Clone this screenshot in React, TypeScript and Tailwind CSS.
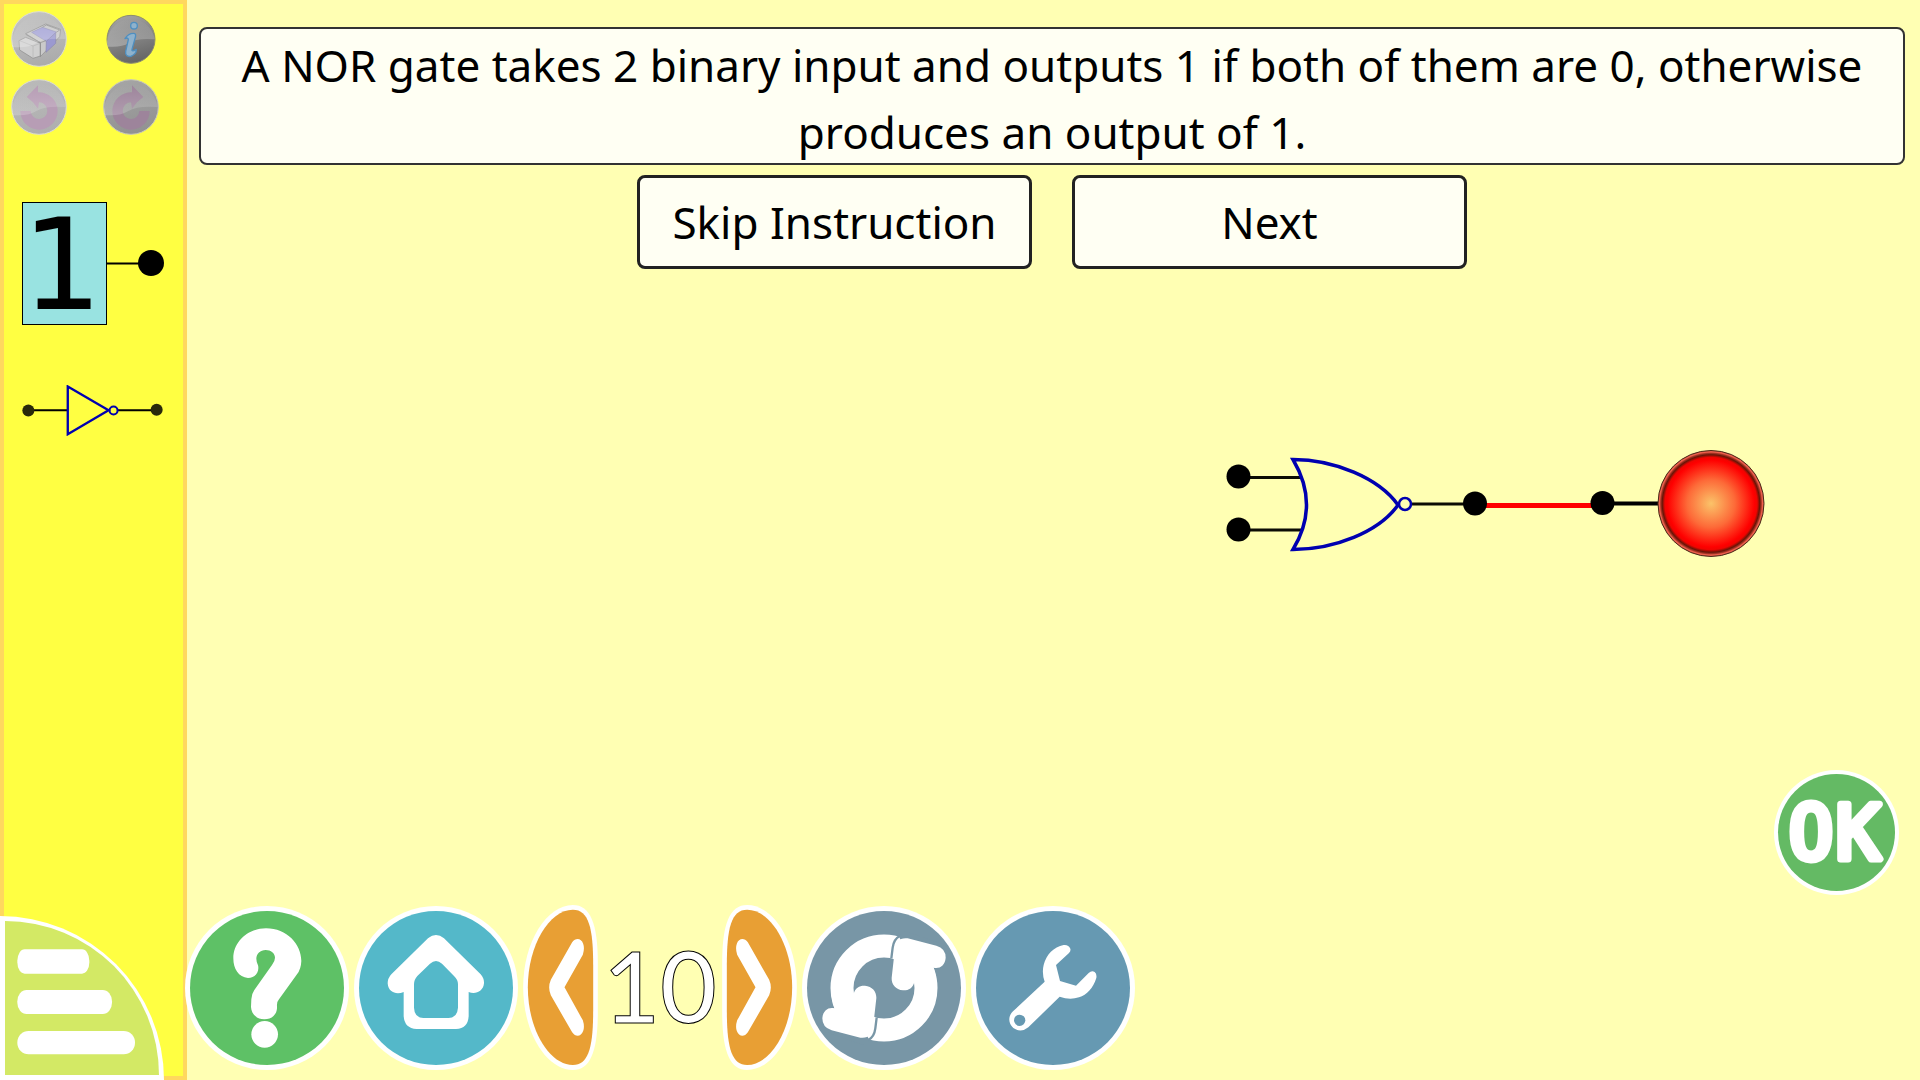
import React from "react";

const roundButton = "block size-[164px] shrink-0 rounded-full";

function GlossDisc({ id, cx, cy, r, light, dark, rim, opacity }: {
  id: string; cx: number; cy: number; r: number; light: string; dark: string; rim: string; opacity: number;
}) {
  return (
    <>
      <defs>
        <linearGradient id={id} x1="0.2" y1="0" x2="0.5" y2="1">
          <stop offset="0" stopColor={light} />
          <stop offset="1" stopColor={dark} />
        </linearGradient>
        <linearGradient id={id + "g"} x1="0" y1="0" x2="0" y2="1">
          <stop offset="0" stopColor="#fff" stopOpacity="0" />
          <stop offset="1" stopColor="#fff" stopOpacity={opacity} />
        </linearGradient>
      </defs>
      <circle cx={cx} cy={cy} r={r} fill={`url(#${id})`} stroke={rim} strokeWidth="3" />
    </>
  );
}

function Gloss({ id, cx, cy, r }: { id: string; cx: number; cy: number; r: number }) {
  return (
    <path
      d={`M${cx - r} ${cy + r * 0.3} A${r} ${r} 0 0 1 ${cx + r} ${cy} Q${cx + r * 0.2} ${cy - r * 0.05} ${cx - r * 0.1} ${cy + r * 0.15} T${cx - r} ${cy + r * 0.3}Z`}
      fill={`url(#${id}g)`}
    />
  );
}

function EraserIcon() {
  return (
    <svg viewBox="34 33 168 168" className="size-14">
      <GlossDisc id="er" cx={118} cy={117} r={82} light="#c4c4c4" dark="#ababab" rim="#dcdcd4" opacity={0.25} />
      <g stroke="#8c8c8c" strokeWidth="2" strokeLinejoin="round">
        <path d="M78 101 L138 72 L183 88 L180 110 L122 170 L122 128Z" fill="#cacaca" />
        <path d="M58 122 L78 112 L122 130 L122 168 L100 175 L60 150Z" fill="#d0d0d0" />
        <path d="M60 122 L100 138 L100 174 M100 138 L122 130" fill="none" stroke="#b5b5b5" />
        <path d="M96 97 L128 82 L170 96 L140 124Z" fill="#a9a8d8" stroke="#9897bd" />
        <path d="M140 124 L168 98 L168 130 L139 157Z" fill="#9b99d0" stroke="#8b89b0" />
        <path d="M78 103 L122 128 L122 170 M122 128 L139 122 M128 82 L140 75 L180 90 L170 97" fill="none" />
      </g>
      <Gloss id="er" cx={118} cy={117} r={80} />
    </svg>
  );
}

function InfoIcon() {
  return (
    <svg viewBox="308 33 168 168" className="size-14">
      <GlossDisc id="in" cx={392} cy={118} r={72} light="#a5a5a5" dark="#666" rim="#8c8c70" opacity={0.28} />
      <Gloss id="in" cx={392} cy={118} r={71} />
      <g fill="#8fb2cc" stroke="#4f8fc0" strokeWidth="4" strokeLinejoin="round">
        <circle cx="401" cy="77" r="10" />
        <path d="M374 116 Q384 99 401 100 Q408 101 405 112 L395 148 Q393 157 408 148 Q409 161 392 169 Q374 172 376 154 L384 119 Q384 112 374 116Z" />
      </g>
    </svg>
  );
}

function TurnIcon({ redo = false }: { redo?: boolean }) {
  const id = redo ? "re" : "un";
  return (
    <svg viewBox="31 239 168 168" className="size-14">
      <GlossDisc id={id} cx={115} cy={323} r={82} light={redo ? "#a6a6a6" : "#bababa"} dark={redo ? "#929292" : "#afafaf"} rim={redo ? "#c6c6bd" : "#dbdbd3"} opacity={0.2} />
      <g transform={redo ? "translate(230 0) scale(-1 1)" : undefined}>
        <path
          d="M59 335 L90 335 A25 25 0 1 0 115 309 L112 328 L112 258 L78 293 L97 309 L112 328 L112 279 A56 56 0 1 1 59 335Z"
          fill={redo ? "#9d849b" : "#b79db5"}
        />
      </g>
      <Gloss id={id} cx={115} cy={323} r={80} />
    </svg>
  );
}

function ConstantOne() {
  return (
    <svg viewBox="22 202 142 123" className="h-[123px] w-[142px] overflow-visible">
      <rect x="22.5" y="202.5" width="84" height="122" fill="#99e3e1" stroke="#000" />
      <path d="M107 263.500H140" stroke="#000" strokeWidth="2" />
      <circle cx="151" cy="263" r="13" />
      <text x="62" y="309" fontSize="126" textAnchor="middle" fontFamily="DejaVu Sans, sans-serif">1</text>
    </svg>
  );
}

function NotGate() {
  return (
    <svg viewBox="67 614 425 152" className="h-[51px] w-[142px]" fill="none">
      <path d="M86 689H204M354 689H470" stroke="#000" strokeWidth="6" />
      <path d="M204 618 L326 689 L204 761Z" stroke="#0000b0" strokeWidth="7" />
      <circle cx="341" cy="690" r="12" stroke="#0000b0" strokeWidth="6" />
      <circle cx="86" cy="690" r="18" fill="#29290b" />
      <circle cx="470" cy="688" r="18" fill="#29290b" />
    </svg>
  );
}

function Circuit() {
  return (
    <svg viewBox="1226 448 540 112" className="h-28 w-[540px]" fill="none" role="img" aria-label="NOR gate wired to a lit bulb">
      <defs>
        <radialGradient id="bulb">
          <stop offset="0" stopColor="#fbc369" />
          <stop offset="0.45" stopColor="#fd6a38" />
          <stop offset="0.82" stopColor="#ff0000" />
          <stop offset="0.87" stopColor="#f00400" />
          <stop offset="0.92" stopColor="#661607" />
          <stop offset="0.95" stopColor="#a83526" />
          <stop offset="0.97" stopColor="#f0604c" />
          <stop offset="1" stopColor="#d85848" />
        </radialGradient>
      </defs>
      <path d="M1486 505.500H1612" stroke="#f00" strokeWidth="5" />
      <path d="M1248 477.500H1301M1248 530H1301M1412 504H1466" stroke="#0c0c04" strokeWidth="3" />
      <path d="M1610 503.500H1659" stroke="#000" strokeWidth="4" />
      <path d="M1293 459.500C1334 459.500 1379 478 1398 505C1379 532 1334 549.500 1293 549.500Q1320 505 1293 459.500Z" stroke="#0000b0" strokeWidth="3.500" />
      <circle cx="1405" cy="504" r="6" stroke="#0000b0" strokeWidth="2.500" />
      <g fill="#000">
        <circle cx="1238.500" cy="476.500" r="12" />
        <circle cx="1238.500" cy="529.500" r="12" />
        <circle cx="1475" cy="503.500" r="12" />
        <circle cx="1602.500" cy="503" r="12" />
      </g>
      <circle cx="1711" cy="503.500" r="53" fill="url(#bulb)" stroke="#4a2a18" />
    </svg>
  );
}

function ArrowButton({ next = false }: { next?: boolean }) {
  return (
    <button aria-label={next ? "Next level" : "Previous level"} className="h-[165px] w-[75px] shrink-0">
      <svg viewBox="519 15 224 495" className="h-[165px] w-[75px]">
        <g transform={next ? "translate(1262 0) scale(-1 1)" : undefined}>
          <path d="M668 15C720 15 743 70 743 190V335C743 455 720 510 668 510C590 510 519 400 519 262C519 125 590 15 668 15Z" fill="#fff" />
          <path d="M668 29C716 29 729 85 729 195V330C729 440 716 495 668 495C598 495 533 390 533 262C533 135 598 29 668 29Z" fill="#e89f34" />
          <path d="M666 127C677 112 693 115 699 131Q704 145 698 164L643 262L698 361Q704 380 699 393C693 410 677 413 666 397L602 286Q592 262 602 239Z" fill="#fff" />
        </g>
      </svg>
    </button>
  );
}

function Toolbar() {
  return (
    <nav aria-label="Activity controls" className="absolute bottom-0 left-0 flex items-end">
      <button aria-label="Menu" className="size-[164px] shrink-0">
        <svg viewBox="0 48 492 492" className="size-[164px]">
          <path d="M0 48A492 492 0 0 1 492 540H0Z" fill="#fff" />
          <path d="M15 63A462 462 0 0 1 477 525H15Z" fill="#d3e965" />
          <g fill="#fff">
            <rect x="52" y="148" width="216" height="73" rx="22" ry="34" />
            <rect x="52" y="270" width="284" height="72" rx="28" ry="34" />
            <rect x="52" y="393" width="353" height="70" rx="34" />
          </g>
        </svg>
      </button>
      <div className="mb-[10px] ml-[21px] flex items-center gap-[5px]">
        <button aria-label="Help" className={roundButton}>
          <svg viewBox="554 15 492 492" className="size-full">
            <circle cx="800" cy="261" r="246" fill="#fff" />
            <circle cx="800" cy="261" r="231" fill="#5ec166" />
            <g fill="#fff">
              <path d="M743 231C715 228 699 205 699 172C699 120 745 82 797 82C860 82 903 130 903 180Q902 205 890 220L836 295Q829 303 830 315C832 340 815 355 792 355C768 355 753 338 752 318L753 295Q753 280 762 267L815 192Q824 180 824 170C824 157 812 147 796 147C780 147 768 159 768 173Q768 182 773 193C778 212 765 231 743 231Z" />
              <circle cx="793" cy="400" r="40" />
            </g>
          </svg>
        </button>
        <button aria-label="Home" className={roundButton}>
          <svg viewBox="12 15 492 492" className="size-full">
            <circle cx="258" cy="261" r="246" fill="#fff" />
            <circle cx="258" cy="261" r="231" fill="#54b8c9" />
            <path
              fill="#fff"
              fillRule="evenodd"
              d="M234 112Q258 92 282 112L392 220Q403 232 402 247C400 272 375 282 356 273V345Q354 383 318 384H200Q163 382 161 345V273C140 282 115 275 113 247Q113 232 124 220ZM192 250Q192 236 202 225L240 188Q258 172 276 188L312 225Q324 236 324 250V320Q322 350 296 351H220Q193 350 192 320Z"
            />
          </svg>
        </button>
        <div className="flex items-center">
          <ArrowButton />
          <output aria-label="Level" className="w-[124px] pb-[6px] text-center font-['Lato',sans-serif] text-[98px] leading-[120px] font-medium text-white [-webkit-text-stroke:1px_black]">
            10
          </output>
          <ArrowButton next />
        </div>
        <button aria-label="Reload" className={roundButton}>
          <svg viewBox="37 15 492 492" className="size-full">
            <circle cx="283" cy="261" r="246" fill="#fff" />
            <circle cx="283" cy="261" r="231" fill="#7896a6" />
            <circle cx="283" cy="261" r="126" fill="none" stroke="#fff" strokeWidth="69" />
            {["rotate(0 283 261)", "rotate(180 283 261)"].map((turn) => (
              <g key={turn} transform={turn}>
                <path d="M327 105L345 90L460 130L475 170L445 205L432 202L400 175L340 130Z" fill="#7896a6" />
                <path d="M315 150Q317 108 354 112L440 134Q468 142 468 170C466 194 450 204 432 200Q440 225 441 245L374 243C370 262 355 269 340 268C318 266 305 250 306 230Z" fill="#fff" />
                <path d="M330 105Q312 115 309 140L305 172" fill="none" stroke="#7896a6" strokeWidth="7" />
              </g>
            ))}
          </svg>
        </button>
        <button aria-label="Settings" className={roundButton}>
          <svg viewBox="544 15 492 492" className="size-full">
            <circle cx="790" cy="261" r="246" fill="#fff" />
            <circle cx="790" cy="261" r="231" fill="#6699b2" />
            <path
              fill="#fff"
              d="M765 242Q756 216 762 192C770 160 792 138 822 132Q836 130 842 143Q844 150 838 156L799 192L811 240L859 254L897 216Q906 208 915 213Q922 219 920 231C910 262 892 281 868 289Q840 298 810 287L716 379Q694 397 671 381C655 366 655 345 670 331Z"
            />
            <circle cx="690" cy="358" r="17" fill="#6699b2" />
          </svg>
        </button>
      </div>
    </nav>
  );
}

const textButton =
  "h-[94px] w-[395px] rounded-lg border-[3px] border-[#222] bg-[#fffff3] text-[44px] leading-[67px]";

export default function App() {
  return (
    <div className="relative flex min-h-screen bg-[#ffffb3] font-['Noto_Sans',sans-serif] text-black">
      <aside className="w-[187px] shrink-0 border-4 border-[#ffd85e] bg-[#ffff42] pt-[7px]">
        <div className="grid grid-cols-[56px_56px] gap-x-9 gap-y-3 pl-[7px]">
          <button aria-label="Delete" className="size-14"><EraserIcon /></button>
          <button aria-label="Info" className="size-14"><InfoIcon /></button>
          <button aria-label="Rotate left" className="size-14"><TurnIcon /></button>
          <button aria-label="Rotate right" className="size-14"><TurnIcon redo /></button>
        </div>
        <div className="mt-[67px] flex flex-col gap-[60px] pl-[18px]">
          <button aria-label="Constant one" className="w-[142px]"><ConstantOne /></button>
          <button aria-label="NOT gate" className="w-[142px]"><NotGate /></button>
        </div>
      </aside>
      <main className="flex flex-1 flex-col pt-[27px] pr-[15px] pl-3">
        <div className="rounded-lg border-2 border-[#333] bg-[#fffff3] px-8">
          <p className="-mb-[3px] pt-[3px] text-center text-[44px] leading-[67px]">
            A NOR gate takes 2 binary input and outputs 1 if both of them are 0, otherwise produces an output of 1.
          </p>
        </div>
        <div className="mt-[10px] flex justify-center gap-10">
          <button className={textButton}>Skip Instruction</button>
          <button className={textButton}>Next</button>
        </div>
        <div className="mt-[179px] flex justify-end pr-[139px]">
          <Circuit />
        </div>
        <div className="mt-[210px] flex justify-end pr-[6px]">
          <button aria-label="OK" className="size-[125px]">
            <svg viewBox="0 0 125 125" className="size-[125px]">
              <circle cx="62.500" cy="62.500" r="62.500" fill="#fff" />
              <circle cx="62.500" cy="62.500" r="58.500" fill="#64ba64" />
              <text
                y="89"
                textAnchor="middle"
                fontFamily="DejaVu Sans Mono, monospace"
                fontSize="74"
                fill="#fff"
                stroke="#fff"
                strokeWidth="7"
                strokeLinejoin="round"
              >
                <tspan x="37">O</tspan>
                <tspan x="84">K</tspan>
              </text>
            </svg>
          </button>
        </div>
      </main>
      <Toolbar />
    </div>
  );
}
